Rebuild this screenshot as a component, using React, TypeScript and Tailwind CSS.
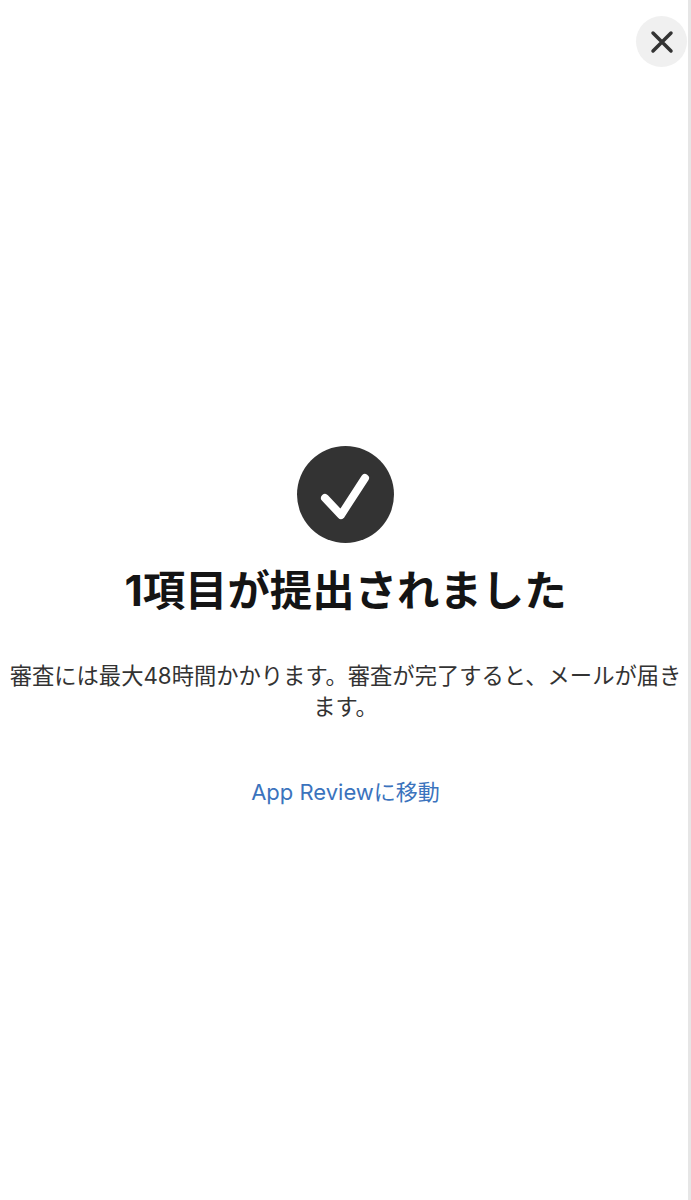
export default function App() {
  return (
    <div className="relative h-[1200px] w-[691px] overflow-hidden bg-white" style={{ fontFamily: 'Inter, "Noto Sans CJK JP", sans-serif' }}>
      <div className="flex h-full w-[691px] flex-col items-center pt-[446px]">
        <div className="flex h-[97px] w-[97px] items-center justify-center rounded-full bg-[#333333]">
          <svg width="97" height="97" viewBox="0 0 97 97" fill="none">
            <path d="M28 52 L44 69 L68 32" stroke="#ffffff" strokeWidth="8" strokeLinecap="round" strokeLinejoin="round" />
          </svg>
        </div>
        <h1 className="mt-[24px] text-[42.4px] font-bold leading-[48px] text-[#141414]">1項目が提出されました</h1>
        <p className="mt-[45px] w-[691px] text-center text-[22.3px] leading-[31px] text-[#333333]">審査には最大48時間かかります。審査が完了すると、メールが届きます。</p>
        <a className="mt-[55px] text-[22px] leading-[31px] text-[#3b73bd]">App Reviewに移動</a>
      </div>
      <button className="absolute left-[636px] top-[16px] flex h-[51px] w-[51px] items-center justify-center rounded-full bg-[#f0f0f0]">
        <svg width="24" height="24" viewBox="0 0 24 24" fill="none">
          <path d="M3 3 L21 21 M21 3 L3 21" stroke="#333333" strokeWidth="3.5" strokeLinecap="round" />
        </svg>
      </button>
      <div className="absolute right-0 top-0 h-full w-[3px] bg-[#e6e6e6]" />
    </div>
  );
}
